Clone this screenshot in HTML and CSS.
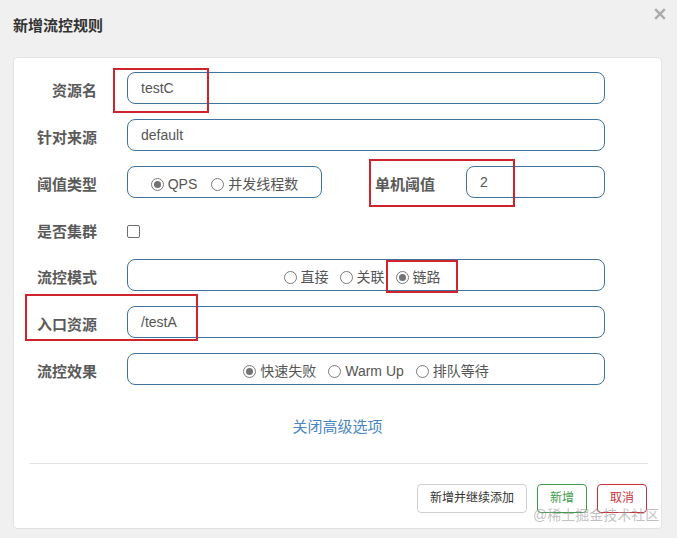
FILE: index.html
```
<!DOCTYPE html>
<html lang="zh-CN">
<head>
<meta charset="utf-8">
<title>新增流控规则</title>
<link rel="stylesheet" href="styles.css">
</head>
<body>
<div class="dialog">
  <div class="header">
    <h4 class="title">新增流控规则</h4>
    <span class="close" aria-label="关闭">
      <svg width="12" height="12" viewBox="0 0 12 12"><path d="M1.2 1.2 L10.8 10.8 M10.8 1.2 L1.2 10.8" stroke="#ababab" stroke-width="2.4" stroke-linecap="butt" fill="none"/></svg>
    </span>
  </div>
  <div class="card">
    <div class="form">
      <div class="row">
        <label class="lbl">资源名</label>
        <div class="field">testC</div>
      </div>
      <div class="row">
        <label class="lbl">针对来源</label>
        <div class="field">default</div>
      </div>
      <div class="row">
        <label class="lbl">阈值类型</label>
        <div class="split">
          <div class="group group-qps">
            <span class="radio"><span class="dot on"></span>QPS</span>
            <span class="radio"><span class="dot"></span>并发线程数</span>
          </div>
          <label class="lbl lbl-inline">单机阈值</label>
          <div class="field field-small">2</div>
        </div>
      </div>
      <div class="row row-check">
        <label class="lbl">是否集群</label>
        <span class="check"></span>
      </div>
      <div class="row">
        <label class="lbl">流控模式</label>
        <div class="group group-mode">
          <span class="radio"><span class="dot"></span>直接</span>
          <span class="radio"><span class="dot"></span>关联</span>
          <span class="radio"><span class="dot on"></span>链路</span>
        </div>
      </div>
      <div class="row">
        <label class="lbl">入口资源</label>
        <div class="field">/testA</div>
      </div>
      <div class="row">
        <label class="lbl">流控效果</label>
        <div class="group">
          <span class="radio"><span class="dot on"></span>快速失败</span>
          <span class="radio"><span class="dot"></span>Warm Up</span>
          <span class="radio"><span class="dot"></span>排队等待</span>
        </div>
      </div>
    </div>
    <div class="toggle"><a class="toggle-link">关闭高级选项</a></div>
    <div class="divider"></div>
    <div class="footer">
      <button class="btn">新增并继续添加</button>
      <button class="btn btn-ok">新增</button>
      <button class="btn btn-cancel">取消</button>
    </div>
  </div>
  <div class="mark mark-1"></div>
  <div class="mark mark-2"></div>
  <div class="mark mark-3"></div>
  <div class="mark mark-4"></div>
  <div class="watermark">@稀土掘金技术社区</div>
</div>
</body>
</html>
```
FILE: styles.css
```
html, body {
  margin: 0;
  padding: 0;
}
body {
  background: #f0f0f0;
  font-family: "Liberation Sans", "Noto Sans CJK SC", sans-serif;
  color: #555;
}
.dialog {
  position: relative;
  width: 677px;
  height: 538px;
  overflow: hidden;
}
.header {
  display: flex;
  justify-content: space-between;
  align-items: flex-start;
  height: 57px;
  padding: 0 11px 0 13px;
  box-sizing: border-box;
}
.title {
  margin: 0;
  padding-top: 15px;
  font-size: 15px;
  line-height: 21px;
  font-weight: bold;
  color: #333;
}
.close {
  display: block;
  margin-top: 8px;
  width: 12px;
  height: 12px;
}
.close svg { display: block; }

.card {
  margin: 0 15px 0 13px;
  background: #fff;
  border: 1px solid #e2e2e2;
  border-radius: 4px;
  padding: 14px 0 15px 0;
}
.form {
  display: flex;
  flex-direction: column;
  gap: 15px;
  padding-right: 56px;
}
.row {
  display: flex;
  align-items: center;
  height: 32px;
}
.row-check {
  height: 31px;
  padding-top: 6px;
  box-sizing: border-box;
}
.lbl {
  flex: 0 0 83px;
  width: 83px;
  margin-right: 30px;
  padding-top: 5px;
  text-align: right;
  font-size: 15px;
  line-height: 20px;
  font-weight: bold;
  color: #5a5a5a;
}
.row-check .lbl {
  padding-top: 0;
}
.field {
  flex: 1;
  height: 32px;
  box-sizing: border-box;
  border: 1px solid #3f729f;
  border-radius: 8px;
  padding: 1px 13px 0;
  font-size: 14px;
  line-height: 29px;
  color: #555;
}
.split {
  flex: 1;
  display: flex;
  align-items: center;
}
.group {
  flex: 1;
  height: 32px;
  box-sizing: border-box;
  border: 1px solid #3f729f;
  border-radius: 8px;
  padding-top: 4px;
  display: flex;
  justify-content: center;
  align-items: center;
  gap: 12px;
  font-size: 14px;
  color: #555;
}
.group-qps {
  flex: 0 0 195px;
  gap: 14px;
}
.group-mode {
  padding-right: 8px;
  gap: 11px;
}
.lbl-inline {
  flex: 1;
  width: auto;
  margin-right: 31px;
}
.field-small {
  flex: 0 0 139px;
}
.radio {
  display: inline-flex;
  align-items: center;
  gap: 4px;
  line-height: 20px;
  white-space: nowrap;
}
.dot {
  width: 13px;
  height: 13px;
  box-sizing: border-box;
  border: 1px solid #7a7a7a;
  border-radius: 50%;
  background: #fff;
  position: relative;
  flex: 0 0 13px;
}
.dot.on::after {
  content: "";
  position: absolute;
  left: 2px;
  top: 2px;
  width: 7px;
  height: 7px;
  border-radius: 50%;
  background: #737373;
}
.check {
  width: 13px;
  height: 13px;
  box-sizing: border-box;
  border: 1px solid #6e6e6e;
  border-radius: 2px;
  background: #fff;
}
.toggle {
  margin-top: 31px;
  text-align: center;
  font-size: 15px;
  line-height: 21px;
}
.toggle-link {
  color: #4a86c2;
  text-decoration: none;
  cursor: pointer;
}
.divider {
  margin: 26px 13px 0 15px;
  height: 1px;
  background: #e3e3e3;
}
.footer {
  margin-top: 20px;
  padding-right: 14px;
  display: flex;
  justify-content: flex-end;
  gap: 10px;
}
.btn {
  height: 29px;
  box-sizing: border-box;
  padding: 0 12px;
  border: 1px solid #cfcfcf;
  border-radius: 4px;
  background: #fff;
  font-family: "Liberation Sans", "Noto Sans CJK SC", sans-serif;
  font-size: 12px;
  line-height: 27px;
  color: #333;
}
.btn-ok {
  border-color: #3f9a4c;
  color: #3f9a4c;
}
.btn-cancel {
  border-color: #c9323c;
  color: #c9323c;
}
.mark {
  position: absolute;
  border: 2px solid #d0242c;
  box-sizing: border-box;
}
.mark-1 { left: 113px; top: 68px; width: 96px; height: 45px; }
.mark-2 { left: 369px; top: 159px; width: 146px; height: 48px; }
.mark-3 { left: 386px; top: 260px; width: 72px; height: 33px; }
.mark-4 { left: 25px; top: 294px; width: 173px; height: 47px; }
.watermark {
  position: absolute;
  left: 533px;
  top: 505px;
  font-size: 14px;
  line-height: 20px;
  color: rgba(150, 150, 150, 0.6);
  white-space: nowrap;
}
```
